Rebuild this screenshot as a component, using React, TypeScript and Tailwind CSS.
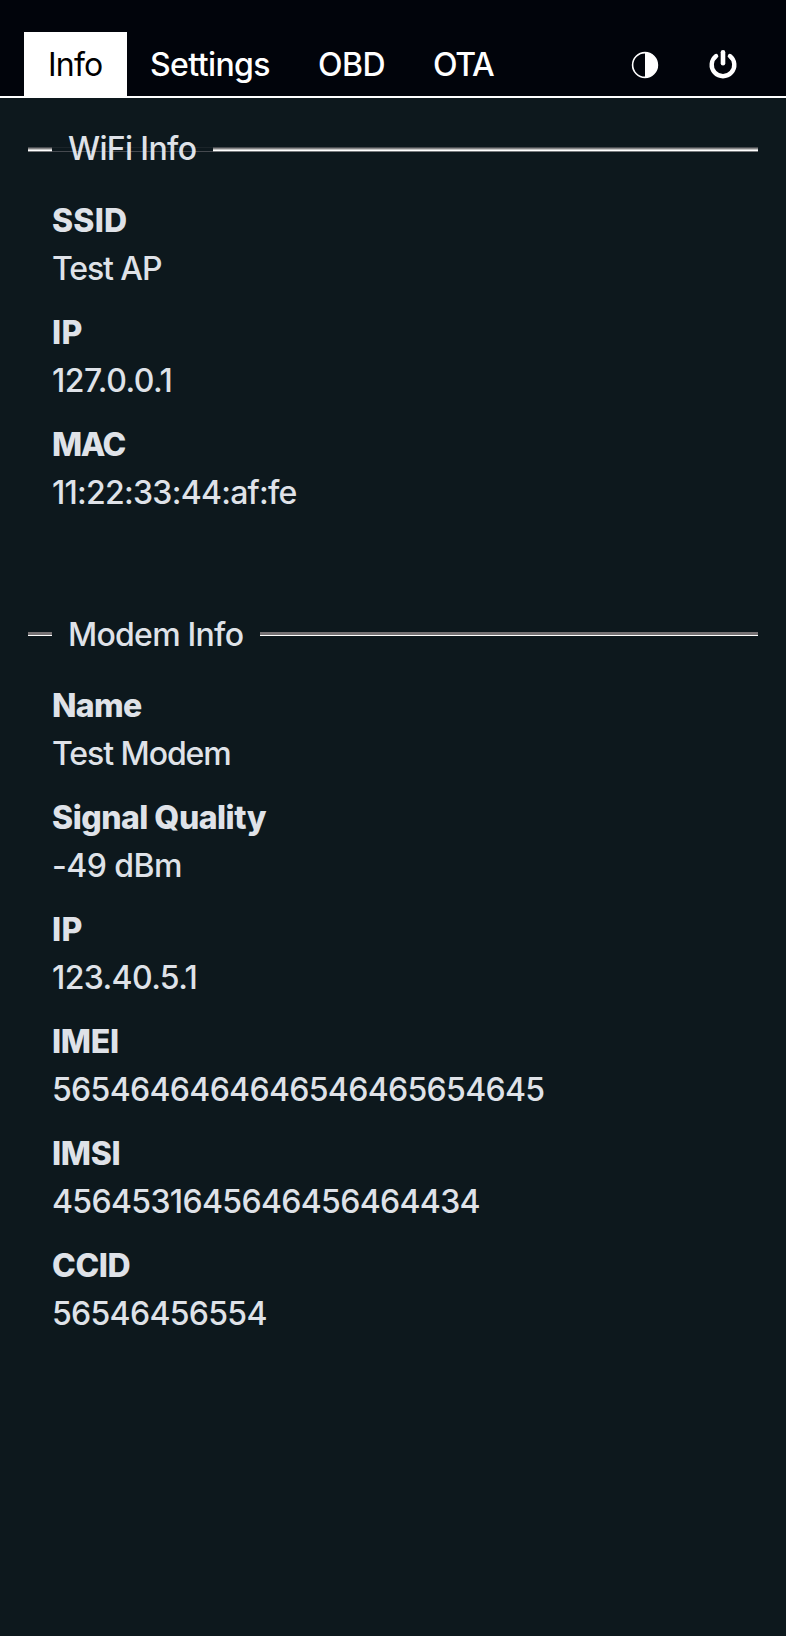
type Row = { label: string; value: string; labelTrack: string; valueTrack: string };

const wifi: Row[] = [
  { label: "SSID", value: "Test AP", labelTrack: "tracking-[0.2px]", valueTrack: "tracking-[-1.1px]" },
  { label: "IP", value: "127.0.0.1", labelTrack: "tracking-[0.4px]", valueTrack: "tracking-[-0.5px]" },
  { label: "MAC", value: "11:22:33:44:af:fe", labelTrack: "tracking-[-1.4px]", valueTrack: "tracking-[-0.73px]" },
];

const modem: Row[] = [
  { label: "Name", value: "Test Modem", labelTrack: "tracking-[-0.7px]", valueTrack: "tracking-[-1.07px]" },
  { label: "Signal Quality", value: "-49 dBm", labelTrack: "tracking-[-0.5px]", valueTrack: "tracking-[-0.55px]" },
  { label: "IP", value: "123.40.5.1", labelTrack: "tracking-[0.4px]", valueTrack: "tracking-[-0.62px]" },
  { label: "IMEI", value: "5654646464646546465654645", labelTrack: "tracking-[-0.3px]", valueTrack: "tracking-[-0.675px]" },
  { label: "IMSI", value: "4564531645646456464434", labelTrack: "tracking-[-0.3px]", valueTrack: "tracking-[-0.66px]" },
  { label: "CCID", value: "56546456554", labelTrack: "tracking-[-0.4px]", valueTrack: "tracking-[-0.7px]" },
];

function Rows({ rows }: { rows: Row[] }) {
  return (
    <dl className="flex flex-col gap-4 pl-[52px]">
      {rows.map((row) => (
        <div key={row.label}>
          <dt className={`h-12 font-[760] ${row.labelTrack}`}>{row.label}</dt>
          <dd className={`h-12 font-[450] ${row.valueTrack}`}>{row.value}</dd>
        </div>
      ))}
    </dl>
  );
}

function WifiRule({ className }: { className: string }) {
  return (
    <span className={`mt-px flex h-[5px] flex-col ${className}`}>
      <span className="h-px bg-[#484c50]" />
      <span className="h-px bg-[#848485]" />
      <span className="h-px bg-[#c8c8c8]" />
      <span className="h-px bg-white" />
      <span className="h-px bg-[#777a7d]" />
    </span>
  );
}

function ModemRule({ className }: { className: string }) {
  return (
    <span className={`flex h-1 flex-col ${className}`}>
      <span className="h-[3px] bg-[#767274]" />
      <span className="h-px bg-white" />
    </span>
  );
}

export default function App() {
  return (
    <div className="h-[1636px] bg-[#0d181d] font-['Inter',sans-serif] text-[32px] leading-[48px] text-[#dfe2e8]">
      <header className="flex h-[98px] items-end border-b-2 border-white bg-[#01040b] pl-6 font-medium text-white">
        <nav className="flex h-16">
          <a className="w-[103px] bg-white pt-[9px] pl-6 font-normal tracking-[-0.8px] text-black">Info</a>
          <a className="w-[167px] pt-[9px] pl-[23px] tracking-[-0.6px]">Settings</a>
          <a className="w-[115px] pt-[9px] pl-6 tracking-[-0.5px]">OBD</a>
          <a className="w-[109px] pt-[9px] pl-6 tracking-[-1.3px]">OTA</a>
        </nav>
        <div className="ml-auto flex h-16 items-center gap-[49px] pr-[48px]">
          <svg className="mt-px" width="28" height="28" viewBox="0 0 28 28">
            <circle cx="14" cy="14" r="12.4" fill="none" stroke="white" strokeWidth="1.6" />
            <path d="M14 1.6a12.4 12.4 0 0 1 0 24.8z" fill="white" />
          </svg>
          <svg width="30" height="30" viewBox="0 0 30 30" fill="none" stroke="white" strokeLinecap="round">
            <path d="M15 3.2v11" strokeWidth="4.6" />
            <path d="M8.1 7A11.3 11.3 0 1 0 21.9 7" strokeWidth="4.4" />
          </svg>
        </div>
      </header>
      <section className="pt-[27px]">
        <h2 className="flex h-12 items-center pr-7 pl-7 font-[550]">
          <WifiRule className="w-6 shrink-0" />
          <span className="relative isolate w-[160.5px] shrink-0 pl-4 tracking-[-0.65px]">
            WiFi Info
            <span className="absolute top-[22px] left-0 -z-10 h-[5px] w-full border-t border-b border-t-[#1b2429] border-b-[#45494f]" />
          </span>
          <WifiRule className="flex-1" />
        </h2>
        <div className="pt-6">
          <Rows rows={wifi} />
        </div>
      </section>
      <section className="pt-[93px]">
        <h2 className="flex h-12 items-center pr-7 pl-7 font-[550]">
          <ModemRule className="w-6 shrink-0" />
          <span className="mt-0.5 w-[208px] shrink-0 pl-4 tracking-[-0.74px]">Modem Info</span>
          <ModemRule className="flex-1" />
        </h2>
        <div className="pt-6">
          <Rows rows={modem} />
        </div>
      </section>
    </div>
  );
}
